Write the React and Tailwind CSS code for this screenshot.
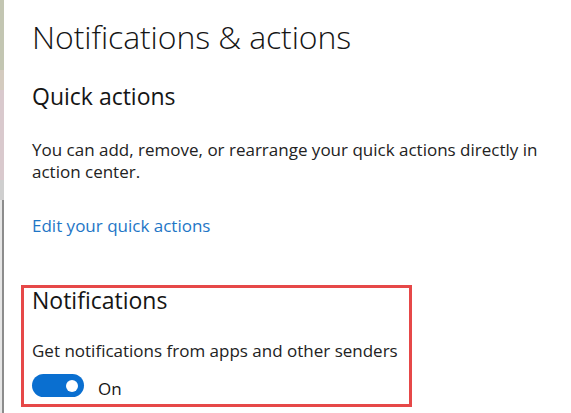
import React from "react";

const Toggle = ({ on }) => (
    <div className={`w-[52px] h-[23px] rounded-full flex items-center px-[6px] ${on ? "bg-[#0a6fd0] justify-end" : "bg-white border-2 border-black justify-start"}`}>
        <div className="w-[12px] h-[12px] rounded-full bg-white" />
    </div>
);

export default function App() {
    return (
        <div className="w-[571px] h-[413px] bg-white flex overflow-hidden font-['Open_Sans',sans-serif] text-[#151515]">
            {/* window edge */}
            <div className="w-[4px] flex flex-col shrink-0">
                <div className="h-[70px] bg-[#c3c6b2]" />
                <div className="h-[20px] bg-[#d4cbbf]" />
                <div className="h-[90px] bg-[#d9c9cd]" />
                <div className="h-[20px] bg-[#cfcfcf]" />
                <div className="flex-1 flex">
                    <div className="w-[2px] bg-[#e6e6e6]" />
                    <div className="w-[2px] bg-[#8c8c8c]" />
                </div>
            </div>

            <div className="flex-1 pl-[28px] pt-[18px]">
                <h1 className="text-[32px] leading-[38px] font-light tracking-[-0.1px] whitespace-nowrap">Notifications &amp; actions</h1>

                <h2 className="mt-[26px] text-[23px] leading-[28px]">Quick actions</h2>
                <p className="mt-[29px] text-[17px] leading-[22px] text-[#222] w-[520px]">
                    You can add, remove, or rearrange your quick actions directly in action center.
                </p>
                <a className="block mt-[32px] text-[17px] leading-[22px] text-[#1e76c6]">Edit your quick actions</a>

                <div className="mt-[48px] -ml-[11px] w-[391px] h-[122px] border-[3px] border-[#e64848] pl-[8px]">
                    <h2 className="-mt-[2px] text-[23px] leading-[28px]">Notifications</h2>
                    <p className="mt-[26px] text-[17px] leading-[22px] text-[#222] whitespace-nowrap">Get notifications from apps and other senders</p>
                    <div className="mt-[12px] flex items-start gap-[14px]">
                        <Toggle on />
                        <span className="mt-[4px] text-[17px] leading-[22px]">On</span>
                    </div>
                </div>
            </div>
        </div>
    );
}
